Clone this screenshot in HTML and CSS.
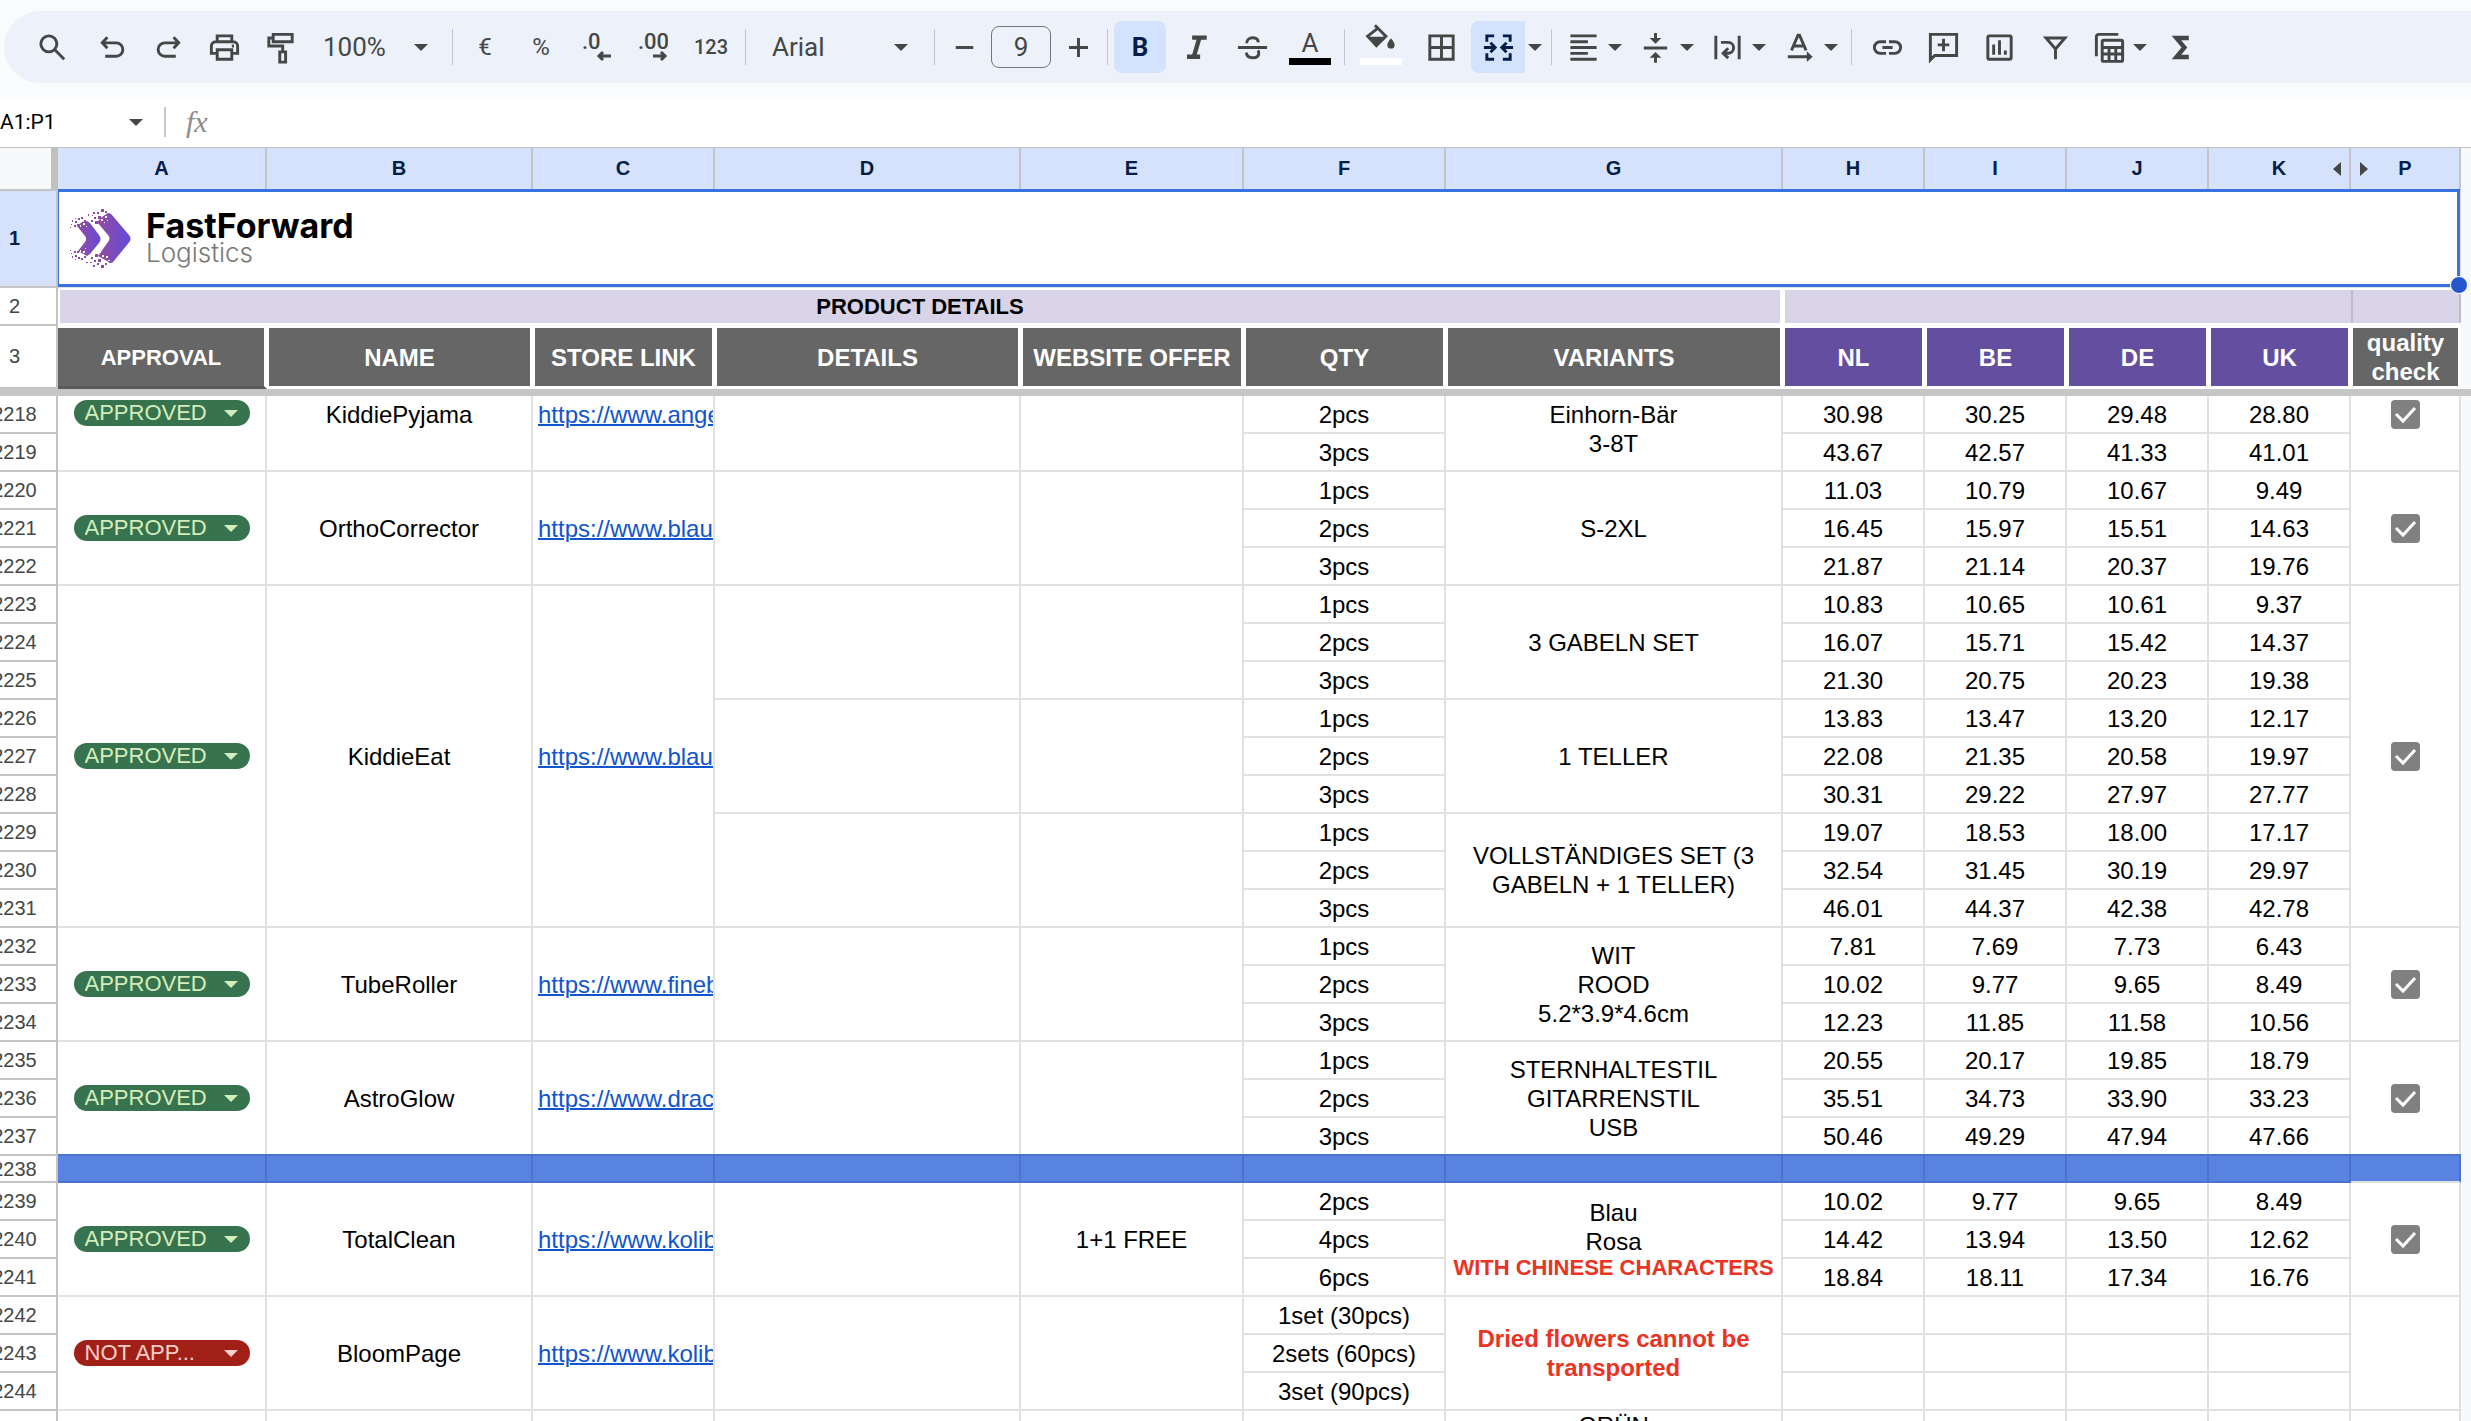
FILE: index.html
```html
<!DOCTYPE html>
<html lang="en">
<head>
  <meta charset="UTF-8" />
  <meta name="viewport" content="width=device-width, initial-scale=1.0">
  <title>FastForward Logistics</title>
  <link rel="stylesheet" href="styles.css">
</head>
<body>

  <!-- Toolbar -->
  <header class="top">
    <div class="toolbar">
      <button class="tool search" aria-label="Search"><svg viewBox="0 0 24 24"><circle cx="9.500" cy="9.500" r="5.500"/><path d="M13.600 13.600 20 20"/></svg></button>
      <button class="tool" aria-label="Undo"><svg viewBox="0 0 24 24"><path d="M8.500 5 5 8.800l3.500 3.700M5.500 8.800h9a4.600 4.600 0 0 1 0 9.200H7"/></svg></button>
      <button class="tool" aria-label="Redo"><svg viewBox="0 0 24 24"><path d="m15.500 5 3.500 3.800-3.500 3.700M18.500 8.800h-9a4.600 4.600 0 0 0 0 9.200H17"/></svg></button>
      <button class="tool" aria-label="Print"><svg viewBox="0 0 24 24"><path d="M7 8V4h10v4M7 16H3v-5a3 3 0 0 1 3-3h12a3 3 0 0 1 3 3v5h-4M7 13.500h10V20H7z"/><path d="M17 11h1.500"/></svg></button>
      <button class="tool" aria-label="Paint format"><svg viewBox="0 0 24 24"><path d="M7 3h13v5H7zM7 5.500H4V11h9.500v4M11.500 15h4v7h-4z"/></svg></button>
      <select class="zoom" aria-label="Zoom"><option>100%</option></select>
      <span class="sep"></span>
      <button class="tool currency" aria-label="Format as currency">€</button>
      <button class="tool currency" aria-label="Format as percent">%</button>
      <button class="tool" aria-label="Decrease decimal places"><svg class="decimal" viewBox="0 0 30 32"><text x="0" y="18">.0</text><path d="M29 25H17M21 21l-4 4 4 4"/></svg></button>
      <button class="tool" aria-label="Increase decimal places"><svg class="decimal" viewBox="0 0 30 32"><text x="0" y="18">.00</text><path d="M15 25h12M23 21l4 4-4 4"/></svg></button>
      <button class="tool formats" aria-label="More formats">123</button>
      <span class="sep"></span>
      <select class="font" aria-label="Font"><option>Arial</option></select>
      <span class="sep"></span>
      <button class="tool step" aria-label="Decrease font size"><svg viewBox="0 0 24 24"><path d="M6 12h12"/></svg></button>
      <input class="font-size" type="text" value="9" aria-label="Font size">
      <button class="tool step" aria-label="Increase font size"><svg viewBox="0 0 24 24"><path d="M5.500 12h13M12 5.500v13"/></svg></button>
      <span class="sep"></span>
      <button class="tool active" aria-label="Bold">B</button>
      <button class="tool" aria-label="Italic"><svg class="thick" viewBox="0 0 24 24"><path d="M9 5.200h10M5.500 18.300h9M14 5.200l-3.800 13.100"/></svg></button>
      <button class="tool" aria-label="Strikethrough"><svg viewBox="0 0 24 24"><path d="M2 12h20M8 9c0-2.200 1.700-3.700 4.200-3.700S15.900 6.700 16 8.500M7.800 15.500c.200 2.200 1.800 3.500 4.300 3.500 2.600 0 4.200-1.300 4.200-3.300 0-.700-.200-1.200-.600-1.700"/></svg></button>
      <button class="tool color" aria-label="Text color">A<span class="swatch black"></span></button>
      <span class="sep"></span>
      <button class="tool color fill" aria-label="Fill color"><svg viewBox="0 0 24 24"><path d="M7.500 1.500 15 9l-6.500 6.500L2.500 9 9 4"/><path class="solid" d="M3 9.500h11.500L8.500 16zM18.500 10.500s-2.500 2.800-2.500 4.500a2.500 2.500 0 0 0 5 0c0-1.700-2.500-4.500-2.500-4.500z"/></svg><span class="swatch"></span></button>
      <button class="tool" aria-label="Borders"><svg viewBox="0 0 24 24"><path d="M4 4h16v16H4zM12 4v16M4 12h16"/></svg></button>
      <div class="split merge">
        <button class="tool active" aria-label="Merge cells"><svg viewBox="0 0 24 24"><path d="M9 4H4v4M4 16v4h5M15 4h5v4M20 16v4h-5M2 12h7M22 12h-7M6.500 8.800 9.700 12l-3.200 3.200M17.500 8.800 14.300 12l3.200 3.200"/></svg></button>
        <button class="arrow" aria-label="Merge type"></button>
      </div>
      <span class="sep"></span>
      <div class="split">
        <button class="tool" aria-label="Horizontal align"><svg viewBox="0 0 24 24"><path d="M3 4h18M3 8h12M3 12h18M3 16h12M3 20h18"/></svg></button>
        <button class="arrow" aria-label="Horizontal align options"></button>
      </div>
      <div class="split">
        <button class="tool" aria-label="Vertical align"><svg viewBox="0 0 24 24"><path d="M4 12.300h16M12 2v6M12 22.500v-6"/><path class="solid" d="M8 5.500h8l-4 4zM8 19h8l-4-4z"/></svg></button>
        <button class="arrow" aria-label="Vertical align options"></button>
      </div>
      <div class="split">
        <button class="tool" aria-label="Text wrapping"><svg viewBox="0 0 24 24"><path d="M4 4v16M20 4v16M7.500 8.500h5a3.700 3.700 0 0 1 0 7.400h-2M12.500 12.500 9 15.900l3.500 3.400"/></svg></button>
        <button class="arrow" aria-label="Text wrapping options"></button>
      </div>
      <div class="split">
        <button class="tool" aria-label="Text rotation"><svg viewBox="0 0 24 24"><path d="M6.500 14 11 3.500h1L16.500 14M8 11h7M4 18.300h14"/><path class="solid" d="m17 14.500 4 3.800-4 3.700z"/></svg></button>
        <button class="arrow" aria-label="Text rotation options"></button>
      </div>
      <span class="sep wide"></span>
      <button class="tool" aria-label="Insert link"><svg viewBox="0 0 24 24"><path d="M11 8H7a4 4 0 0 0 0 8h4M13 8h4a4 4 0 0 1 0 8h-4M8.500 12h7"/></svg></button>
      <button class="tool" aria-label="Insert comment"><svg viewBox="0 0 24 24"><path d="M3 20.500V3h18v14.500H6zM12 6v8.500M8 10.200h8"/></svg></button>
      <button class="tool" aria-label="Insert chart"><svg viewBox="0 0 24 24"><rect x="4" y="4" width="16" height="16" rx="1"/><path d="M8 10v7M12 7v10M16 14v3"/></svg></button>
      <button class="tool" aria-label="Create a filter"><svg viewBox="0 0 24 24"><path d="M5.500 5.500h13L12 13zM12 12v8"/></svg></button>
      <div class="split views">
        <button class="tool" aria-label="Table views"><svg viewBox="0 0 24 24"><path d="M3 18V4.500A1.500 1.500 0 0 1 4.500 3H18"/><rect x="7" y="7" width="14" height="14.500" rx="1"/><path d="M7 12h14M7 16.500h14M11.700 12v9M16.300 12v9"/></svg></button>
        <button class="arrow" aria-label="Table view options"></button>
      </div>
      <button class="tool" aria-label="Functions"><svg class="thick" viewBox="0 0 24 24"><path d="M17 5.500H8.500l5.500 6.500-5.500 6.500H17"/></svg></button>
    </div>
  </header>

  <!-- Formula bar -->
  <div class="formula-bar">
    <input class="name-box" type="text" value="A1:P1" aria-label="Name box">
    <button class="arrow" aria-label="Named ranges"></button>
    <span class="formula-sep"></span>
    <label class="fx" for="formula">fx</label>
    <input class="formula" id="formula" type="text">
  </div>

  <!-- Sheet -->
  <main class="sheet">
    <table class="grid">
      <colgroup>
        <col class="col-head"><col class="col-a"><col class="col-b"><col class="col-c"><col class="col-d"><col class="col-e"><col class="col-f"><col class="col-g"><col class="col-price"><col class="col-price"><col class="col-price"><col class="col-price"><col class="col-p">
      </colgroup>
      <thead>
        <tr class="letters">
          <th class="corner"></th><th>A</th><th>B</th><th>C</th><th>D</th><th>E</th><th>F</th><th>G</th><th>H</th><th>I</th><th>J</th><th>K<span class="hidden-left"></span></th><th>P<span class="hidden-right"></span></th>
        </tr>
        <tr class="logo-row">
          <th class="num">1</th>
          <td class="selected" colspan="12">
            <div class="logo">
              <svg viewBox="0 0 62 62" aria-hidden="true">
                <defs>
                  <linearGradient id="chevron" gradientUnits="userSpaceOnUse" x1="27" y1="0" x2="61" y2="0"><stop offset="0" stop-color="#964b9e"/><stop offset="1" stop-color="#5f4bdc"/></linearGradient>
                  <linearGradient id="chevron-small" gradientUnits="userSpaceOnUse" x1="7" y1="0" x2="32" y2="0"><stop offset="0" stop-color="#964b9e"/><stop offset="1" stop-color="#5f4bdc"/></linearGradient>
                </defs>
                <path fill="url(#chevron)" d="M38 5c2 0 3 1 4 2l17 20c2 2.500 2 5 0 7.500L43 54c-2 2-4 1-6-1l-9-5 10-14c2-2.500 2-4.500 0-7L27 14l5-5z"/>
                <path fill="url(#chevron-small)" d="m17 13 3 2 9 12c2 3 2 5 0 8l-9 11-3 2-9-5 7-9c1.500-2 1.500-4 0-6L7 18l5-4z"/>
                <g fill="#8c4ba6">
                  <path d="M31 1h3v3h-3zM27 4h2v2h-2zM23 4h2v2h-2zM28 8h3v3h-3zM24 9h2v2h-2zM21 12h2v2h-2zM35 3h2v2h-2zM25 13h3v3h-3zM18 6h1v2h-1zM22 7h1v1h-1z"/>
                  <path d="M31 57h3v3h-3zM27 55h2v2h-2zM23 57h2v2h-2zM28 51h3v3h-3zM24 52h2v2h-2zM21 49h2v2h-2zM35 55h2v2h-2zM25 46h3v3h-3zM16 54h2v1h-2zM20 54h2v1h-2z"/>
                  <path d="M8 10h2v2H8zM11 9h2v2h-2zM5 13h2v2H5zM2 12h1v2H2zM4 17h2v2H4zM1 16h1v1H1zM0 19h1v1H0zM14 12h2v2h-2zM7 16h2v2H7zM5 10h1v1H5z"/>
                  <path d="M8 49h2v2H8zM11 50h2v2h-2zM5 47h2v2H5zM2 48h1v2H2zM4 43h2v2H4zM1 45h1v1H1zM0 42h1v1H0zM14 48h2v2h-2zM7 43h2v2H7zM5 51h1v1H5z"/>
                </g>
                <g fill="#fff">
                  <path d="M35 8h2v2h-2zM31 11h2v2h-2zM37 12h1v1h-1zM34 14h1v1h-1zM36 48h2v2h-2zM32 47h2v2h-2zM38 52h2v1h-2zM30 44h1v1h-1z"/>
                  <path d="M13 15h2v2h-2zM10 17h1v2h-1zM16 18h1v1h-1zM13 43h2v2h-2zM10 42h1v2h-1zM15 40h1v1h-1z"/>
                </g>
              </svg>
              <div class="logo-text"><strong>FastForward</strong><span>Logistics</span></div>
            </div>
          </td>
        </tr>
        <tr class="group-row">
          <th class="num">2</th>
          <th class="group main" colspan="7">PRODUCT DETAILS</th>
          <th class="group" colspan="4"></th>
          <th class="group last"></th>
        </tr>
        <tr class="title-row">
          <th class="num">3</th>
          <th class="small">APPROVAL</th><th>NAME</th><th>STORE LINK</th><th>DETAILS</th><th>WEBSITE OFFER</th><th>QTY</th><th>VARIANTS</th>
          <th class="country">NL</th><th class="country">BE</th><th class="country">DE</th><th class="country">UK</th>
          <th class="check">quality check</th>
        </tr>
        <tr class="freeze"><td colspan="13"></td></tr>
      </thead>
      <tbody>
        <!-- KiddiePyjama -->
        <tr class="cut">
          <th class="num">2218</th>
          <td rowspan="2"><select class="chip" aria-label="Approval"><option>APPROVED</option></select></td>
          <td rowspan="2">KiddiePyjama</td>
          <td rowspan="2" class="link"><a href="#">https://www.ange</a></td>
          <td rowspan="2"></td>
          <td rowspan="2"></td>
          <td>2pcs</td>
          <td rowspan="2">Einhorn-Bär<br>3-8T</td>
          <td>30.98</td><td>30.25</td><td>29.48</td><td>28.80</td>
          <td rowspan="2"><input type="checkbox" aria-label="Quality check" checked></td>
        </tr>
        <tr><th class="num">2219</th><td>3pcs</td><td>43.67</td><td>42.57</td><td>41.33</td><td>41.01</td></tr>

        <!-- OrthoCorrector -->
        <tr>
          <th class="num">2220</th>
          <td rowspan="3"><select class="chip" aria-label="Approval"><option>APPROVED</option></select></td>
          <td rowspan="3">OrthoCorrector</td>
          <td rowspan="3" class="link"><a href="#">https://www.blaue</a></td>
          <td rowspan="3"></td>
          <td rowspan="3"></td>
          <td>1pcs</td>
          <td rowspan="3">S-2XL</td>
          <td>11.03</td><td>10.79</td><td>10.67</td><td>9.49</td>
          <td rowspan="3"><input type="checkbox" aria-label="Quality check" checked></td>
        </tr>
        <tr><th class="num">2221</th><td>2pcs</td><td>16.45</td><td>15.97</td><td>15.51</td><td>14.63</td></tr>
        <tr><th class="num">2222</th><td>3pcs</td><td>21.87</td><td>21.14</td><td>20.37</td><td>19.76</td></tr>

        <!-- KiddieEat -->
        <tr>
          <th class="num">2223</th>
          <td rowspan="9"><select class="chip" aria-label="Approval"><option>APPROVED</option></select></td>
          <td rowspan="9">KiddieEat</td>
          <td rowspan="9" class="link"><a href="#">https://www.blaue</a></td>
          <td rowspan="3"></td>
          <td rowspan="3"></td>
          <td>1pcs</td>
          <td rowspan="3">3 GABELN SET</td>
          <td>10.83</td><td>10.65</td><td>10.61</td><td>9.37</td>
          <td rowspan="9"><input type="checkbox" aria-label="Quality check" checked></td>
        </tr>
        <tr><th class="num">2224</th><td>2pcs</td><td>16.07</td><td>15.71</td><td>15.42</td><td>14.37</td></tr>
        <tr><th class="num">2225</th><td>3pcs</td><td>21.30</td><td>20.75</td><td>20.23</td><td>19.38</td></tr>
        <tr>
          <th class="num">2226</th>
          <td rowspan="3"></td>
          <td rowspan="3"></td>
          <td>1pcs</td>
          <td rowspan="3">1 TELLER</td>
          <td>13.83</td><td>13.47</td><td>13.20</td><td>12.17</td>
        </tr>
        <tr><th class="num">2227</th><td>2pcs</td><td>22.08</td><td>21.35</td><td>20.58</td><td>19.97</td></tr>
        <tr><th class="num">2228</th><td>3pcs</td><td>30.31</td><td>29.22</td><td>27.97</td><td>27.77</td></tr>
        <tr>
          <th class="num">2229</th>
          <td rowspan="3"></td>
          <td rowspan="3"></td>
          <td>1pcs</td>
          <td rowspan="3">VOLLSTÄNDIGES SET (3 GABELN + 1 TELLER)</td>
          <td>19.07</td><td>18.53</td><td>18.00</td><td>17.17</td>
        </tr>
        <tr><th class="num">2230</th><td>2pcs</td><td>32.54</td><td>31.45</td><td>30.19</td><td>29.97</td></tr>
        <tr><th class="num">2231</th><td>3pcs</td><td>46.01</td><td>44.37</td><td>42.38</td><td>42.78</td></tr>

        <!-- TubeRoller -->
        <tr>
          <th class="num">2232</th>
          <td rowspan="3"><select class="chip" aria-label="Approval"><option>APPROVED</option></select></td>
          <td rowspan="3">TubeRoller</td>
          <td rowspan="3" class="link"><a href="#">https://www.fineb</a></td>
          <td rowspan="3"></td>
          <td rowspan="3"></td>
          <td>1pcs</td>
          <td rowspan="3">WIT<br>ROOD<br>5.2*3.9*4.6cm</td>
          <td>7.81</td><td>7.69</td><td>7.73</td><td>6.43</td>
          <td rowspan="3"><input type="checkbox" aria-label="Quality check" checked></td>
        </tr>
        <tr><th class="num">2233</th><td>2pcs</td><td>10.02</td><td>9.77</td><td>9.65</td><td>8.49</td></tr>
        <tr><th class="num">2234</th><td>3pcs</td><td>12.23</td><td>11.85</td><td>11.58</td><td>10.56</td></tr>

        <!-- AstroGlow -->
        <tr>
          <th class="num">2235</th>
          <td rowspan="3"><select class="chip" aria-label="Approval"><option>APPROVED</option></select></td>
          <td rowspan="3">AstroGlow</td>
          <td rowspan="3" class="link"><a href="#">https://www.drac</a></td>
          <td rowspan="3"></td>
          <td rowspan="3"></td>
          <td>1pcs</td>
          <td rowspan="3">STERNHALTESTIL<br>GITARRENSTIL<br>USB</td>
          <td>20.55</td><td>20.17</td><td>19.85</td><td>18.79</td>
          <td rowspan="3"><input type="checkbox" aria-label="Quality check" checked></td>
        </tr>
        <tr><th class="num">2236</th><td>2pcs</td><td>35.51</td><td>34.73</td><td>33.90</td><td>33.23</td></tr>
        <tr><th class="num">2237</th><td>3pcs</td><td>50.46</td><td>49.29</td><td>47.94</td><td>47.66</td></tr>

        <tr class="divider"><th class="num">2238</th><td></td><td></td><td></td><td></td><td></td><td></td><td></td><td></td><td></td><td></td><td></td><td></td></tr>

        <!-- TotalClean -->
        <tr>
          <th class="num">2239</th>
          <td rowspan="3"><select class="chip" aria-label="Approval"><option>APPROVED</option></select></td>
          <td rowspan="3">TotalClean</td>
          <td rowspan="3" class="link"><a href="#">https://www.kolib</a></td>
          <td rowspan="3"></td>
          <td rowspan="3">1+1 FREE</td>
          <td>2pcs</td>
          <td rowspan="3">Blau<br>Rosa<span class="warning note">WITH CHINESE CHARACTERS</span></td>
          <td>10.02</td><td>9.77</td><td>9.65</td><td>8.49</td>
          <td rowspan="3"><input type="checkbox" aria-label="Quality check" checked></td>
        </tr>
        <tr><th class="num">2240</th><td>4pcs</td><td>14.42</td><td>13.94</td><td>13.50</td><td>12.62</td></tr>
        <tr><th class="num">2241</th><td>6pcs</td><td>18.84</td><td>18.11</td><td>17.34</td><td>16.76</td></tr>

        <!-- BloomPage -->
        <tr>
          <th class="num">2242</th>
          <td rowspan="3"><select class="chip rejected" aria-label="Approval"><option>NOT APP...</option></select></td>
          <td rowspan="3">BloomPage</td>
          <td rowspan="3" class="link"><a href="#">https://www.kolib</a></td>
          <td rowspan="3"></td>
          <td rowspan="3"></td>
          <td>1set (30pcs)</td>
          <td rowspan="3" class="warning">Dried flowers cannot be transported</td>
          <td></td><td></td><td></td><td></td>
          <td rowspan="3"></td>
        </tr>
        <tr><th class="num">2243</th><td>2sets (60pcs)</td><td></td><td></td><td></td><td></td></tr>
        <tr><th class="num">2244</th><td>3set (90pcs)</td><td></td><td></td><td></td><td></td></tr>

        <tr>
          <th class="num">2245</th>
          <td></td><td></td><td></td><td></td><td></td>
          <td>1pcs</td>
          <td class="top-line">GRÜN</td>
          <td>10.40</td><td>10.05</td><td>10.01</td><td>8.69</td>
          <td></td>
        </tr>
      </tbody>
    </table>
  </main>

</body>
</html>
```
FILE: styles.css
```css
/* Basic Reset */
* {
  margin: 0;
  padding: 0;
  box-sizing: border-box;
}
body {
  height: 100vh;
  overflow: hidden;
  background-color: #fff;
  font-family: "Liberation Sans", Arial, sans-serif;
  color: #000;
}
button, select, input {
  border: none;
  background: none;
  font: inherit;
  color: inherit;
}
/* Toolbar */
.top {
  background-color: #f9fbfd;
  padding: 11px 0 14px 4px;
}
.toolbar {
  display: flex;
  align-items: center;
  gap: 4px;
  height: 72px;
  padding-left: 22px;
  border-radius: 36px 0 0 36px;
  background-color: #edf2fa;
  color: #444746;
  font-family: Roboto, sans-serif;
  font-size: 26px;
}
.tool {
  display: flex;
  flex-direction: column;
  align-items: center;
  justify-content: center;
  flex: none;
  width: 52px;
  height: 52px;
  border-radius: 8px;
}
.tool svg {
  width: 35px;
  height: 35px;
  fill: none;
  stroke: currentColor;
  stroke-width: 2;
}
.tool .thick {
  stroke-width: 3;
}
.tool .solid {
  fill: currentColor;
  stroke: none;
}
.tool .decimal {
  width: 30px;
  height: 32px;
  stroke-width: 3;
}
.decimal text {
  fill: currentColor;
  stroke: none;
  font-size: 22px;
  font-weight: 500;
}
.search {
  margin-right: 4px;
}
.currency {
  font-size: 24px;
}
.formats {
  width: 56px;
  font-size: 20px;
  font-weight: 500;
}
.step {
  width: 46px;
}
.active {
  background-color: #d3e3fd;
  color: #041e49;
  font-weight: 700;
}
.color {
  width: 56px;
  justify-content: flex-end;
  padding-bottom: 8px;
  font-size: 26px;
  line-height: 30px;
}
.fill {
  width: 60px;
}
.swatch {
  width: 42px;
  height: 7px;
  background-color: #fff;
}
.black {
  background-color: #000;
}
.sep {
  flex: none;
  width: 1px;
  height: 36px;
  margin: 0 2px;
  background-color: #c7c7c7;
}
.wide {
  margin: 0 5px;
}
.zoom, .font {
  flex: none;
  height: 52px;
  appearance: none;
  background: url("data:image/svg+xml,%3Csvg xmlns='http://www.w3.org/2000/svg' width='14' height='7'%3E%3Cpath fill='%23444746' d='M0 0h14L7 7z'/%3E%3C/svg%3E") no-repeat right 20px center;
}
.zoom {
  width: 136px;
  padding-left: 13px;
  background-position: right 18px center;
}
.font {
  width: 176px;
  padding-left: 20px;
}
.font-size {
  flex: none;
  width: 60px;
  height: 42px;
  border: 1px solid #747775;
  border-radius: 8px;
  text-align: center;
}
.split {
  display: flex;
  align-items: center;
  flex: none;
  margin-right: 4px;
}
.split .tool {
  width: 50px;
}
.merge {
  margin-right: 0;
}
.merge .tool {
  width: 54px;
  border-radius: 8px 0 0 8px;
}
.merge .arrow {
  width: 20px;
}
.views .tool {
  width: 48px;
}
.arrow {
  flex: none;
  width: 14px;
  height: 36px;
  background: url("data:image/svg+xml,%3Csvg xmlns='http://www.w3.org/2000/svg' width='14' height='7'%3E%3Cpath fill='%23444746' d='M0 0h14L7 7z'/%3E%3C/svg%3E") no-repeat center;
}
/* Formula bar */
.formula-bar {
  display: flex;
  align-items: center;
  height: 51px;
  border-bottom: 1px solid #c0c0c0;
}
.name-box {
  width: 129px;
  font-family: Roboto, sans-serif;
  font-size: 21px;
}
.formula-sep {
  width: 2px;
  height: 30px;
  margin: 0 20px 0 21px;
  background-color: #c7c7c7;
}
.fx {
  font-family: "Liberation Serif", serif;
  font-size: 30px;
  font-style: italic;
  line-height: 30px;
  color: #8c8c8c;
}
.formula {
  flex: 1;
  height: 40px;
  margin-left: 12px;
}
/* Sheet */
.sheet {
  overflow: hidden;
  background-color: #f8f9fa;
}
.grid {
  width: calc(100% + 17px);
  margin-left: -27px;
  table-layout: fixed;
  border-spacing: 0;
  font-size: 24px;
  line-height: 29px;
}
.col-head { width: 85px; }
.col-a { width: 209px; }
.col-b { width: 266px; }
.col-c { width: 182px; }
.col-d { width: 306px; }
.col-e { width: 223px; }
.col-f { width: 202px; }
.col-price { width: 142px; }
.col-p { width: 110px; }
.grid td {
  height: 38px;
  border-right: 2px solid #e1e1e1;
  border-bottom: 2px solid #e1e1e1;
  background-color: #fff;
  text-align: center;
  vertical-align: middle;
}
/* Column letters and row numbers */
.letters th {
  position: relative;
  height: 43px;
  border-right: 2px solid #c4c4c4;
  border-bottom: 2px solid #c4c4c4;
  background-color: #d6e2fb;
  font-size: 20px;
  color: #041e49;
}
.letters .corner {
  border-right: 7px solid #c0c0c0;
  background-color: #f8f9fa;
}
.hidden-left, .hidden-right {
  position: absolute;
  top: 14px;
  border: 7px solid transparent;
}
.hidden-left {
  right: 8px;
  border-left: none;
  border-right: 8px solid #444746;
}
.hidden-right {
  left: 9px;
  border-right: none;
  border-left: 8px solid #444746;
}
.grid .num {
  border: solid #c4c4c4;
  border-width: 0 2px 2px 0;
  background-color: #fff;
  font-size: 20px;
  font-weight: 400;
  color: #444746;
}
.logo-row .num {
  background-color: #d6e2fb;
  font-weight: 700;
  color: #041e49;
}
/* Selected range */
.grid .selected {
  position: relative;
  height: 97px;
  padding-left: 12px;
}
.selected::before {
  content: "";
  position: absolute;
  inset: -2px -1px -1px 0;
  border: 3px solid #3871e0;
  border-left-width: 1px;
}
.selected::after {
  content: "";
  position: absolute;
  right: -9px;
  bottom: -8px;
  z-index: 1;
  width: 16px;
  height: 16px;
  border: 1px solid #fff;
  border-radius: 50%;
  background-color: #2556cc;
}
.logo {
  display: flex;
  align-items: center;
  gap: 14px;
}
.logo svg {
  width: 62px;
  height: 62px;
}
.logo-text {
  display: flex;
  flex-direction: column;
  font-family: Inter, sans-serif;
  line-height: 27px;
  text-align: left;
}
.logo-text strong {
  font-size: 34px;
  font-weight: 700;
}
.logo-text span {
  font-size: 26px;
  font-weight: 300;
  color: #777;
}
/* Header rows */
.grid .group {
  height: 38px;
  border: solid #fff;
  border-width: 2px 0 3px 2px;
  background-color: #d9d3e7;
  font-size: 22px;
}
.grid .main {
  border-right-width: 3px;
}
.grid .last {
  box-shadow: inset 2px 0 0 #bfb9d1, inset -2px 0 0 #bfb9d1;
  border-left-width: 0;
}
.title-row th {
  height: 63px;
  border: solid #fff;
  border-width: 2px 3px 3px 2px;
  background-color: #666;
  color: #fff;
}
.title-row .small {
  border-left-width: 0;
  border-bottom-color: #595959;
  font-size: 22px;
}
.title-row .country {
  background-color: #634ea0;
}
.freeze td {
  height: 7px;
  border: none;
  background-color: #c6c6c6;
  box-shadow: 10px 0 0 #c6c6c6;
}
/* Body cells */
.grid .link {
  overflow: hidden;
  padding-left: 5px;
  text-align: left;
  white-space: nowrap;
}
.link a {
  color: #1155cc;
  text-decoration-thickness: 2px;
}
.cut td[rowspan] {
  padding-top: 4px;
  vertical-align: top;
}
.grid .top-line {
  vertical-align: top;
}
.chip {
  display: block;
  width: 176px;
  height: 26px;
  margin: 0 auto;
  padding-left: 11px;
  appearance: none;
  border-radius: 13px;
  background: #37734f url("data:image/svg+xml,%3Csvg xmlns='http://www.w3.org/2000/svg' width='14' height='7'%3E%3Cpath fill='%23d4edbc' d='M0 0h14L7 7z'/%3E%3C/svg%3E") no-repeat right 12px center;
  font-size: 22px;
  line-height: 24px;
  color: #d4edbc;
}
.rejected {
  background: #a02017 url("data:image/svg+xml,%3Csvg xmlns='http://www.w3.org/2000/svg' width='14' height='7'%3E%3Cpath fill='%23ffcfc9' d='M0 0h14L7 7z'/%3E%3C/svg%3E") no-repeat right 12px center;
  color: #ffcfc9;
}
input[type="checkbox"] {
  display: block;
  width: 29px;
  height: 29px;
  margin: 0 auto;
  appearance: none;
  border-radius: 4px;
  background: #808080 url("data:image/svg+xml,%3Csvg xmlns='http://www.w3.org/2000/svg' width='29' height='29'%3E%3Cpath fill='none' stroke='%23fff' stroke-width='3' d='M5 14l7 7L24 8'/%3E%3C/svg%3E") no-repeat center;
}
.grid .warning {
  color: #ea3323;
  font-weight: 700;
}
.note {
  display: block;
  font-size: 22px;
  line-height: 24px;
}
/* Blue divider row */
.grid .divider > * {
  height: 27px;
  line-height: 24px;
}
.grid .divider td {
  border-color: #4b73cb;
  background-color: #5983e1;
  box-shadow: 0 -2px 0 #4b73cb;
}
.grid .divider td:last-child {
  border-bottom-color: #e1e1e1;
}
```
